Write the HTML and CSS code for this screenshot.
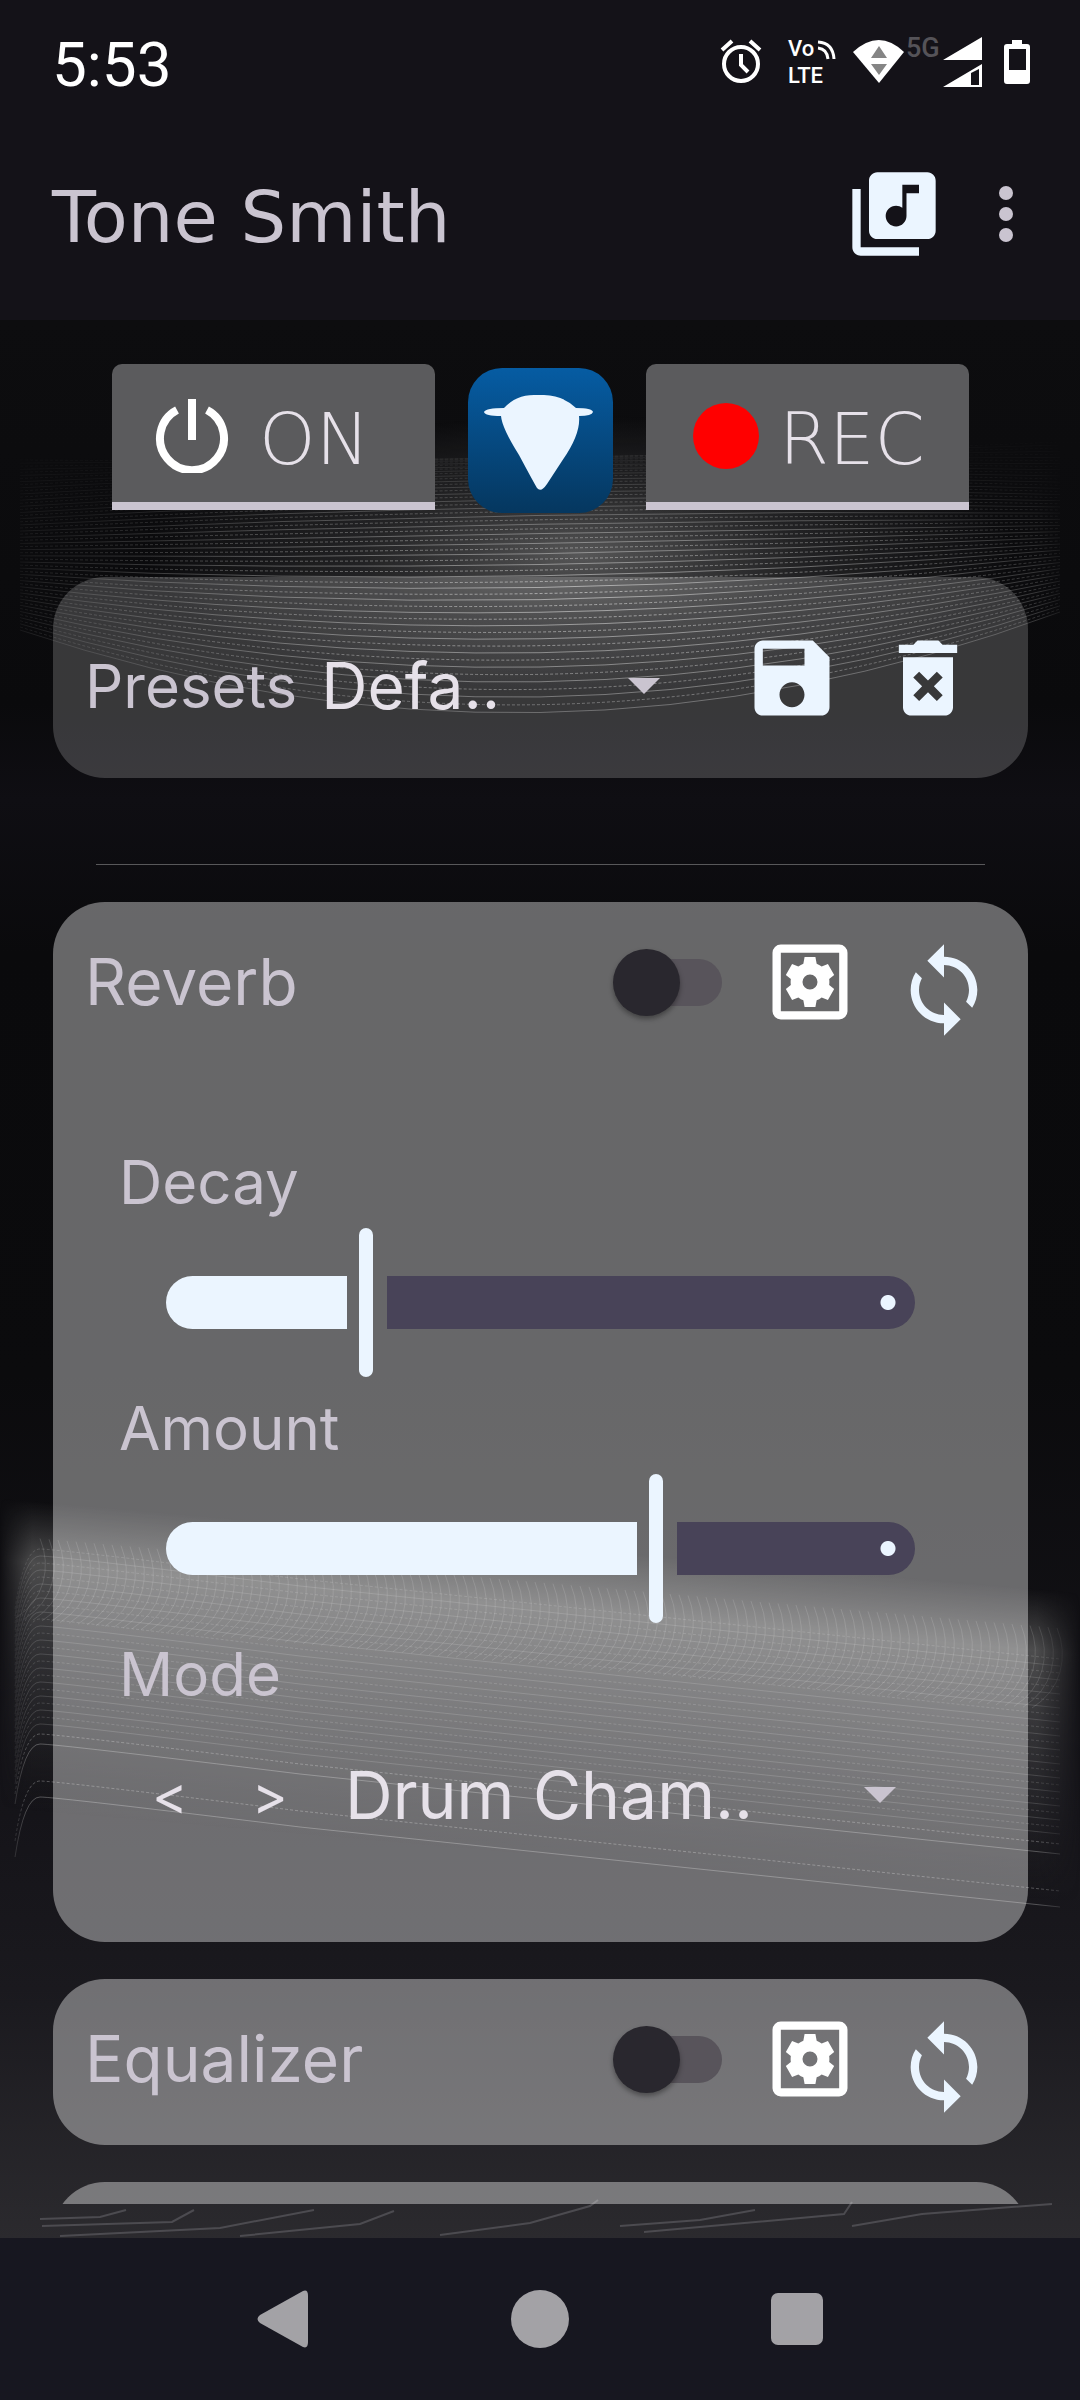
FILE: index.html
```html
<!DOCTYPE html>
<html lang="en">
<head>
<meta charset="utf-8">
<meta name="viewport" content="width=device-width, initial-scale=1">
<title>Tone Smith</title>
<link rel="stylesheet" href="styles.css">
</head>
<body>
<svg class="sprite" aria-hidden="true">
  <symbol id="i-settings" viewBox="0 0 24 24"><path fill-rule="evenodd" d="M5 3h14a2 2 0 0 1 2 2v14a2 2 0 0 1-2 2H5a2 2 0 0 1-2-2V5a2 2 0 0 1 2-2zM5 5v14h14V5z"/><path fill-rule="evenodd" d="M16.6 12.7q.1-.7 0-1.4l1.2-1-1.5-2.6-1.5.6q-.6-.5-1.2-.7L13.300 6h-2.600l-.3 1.600q-.6.200-1.200.7l-1.500-.6-1.500 2.600 1.200 1q-.1.700 0 1.400l-1.200 1 1.500 2.600 1.500-.6q.6.500 1.200.7l.3 1.600h2.600l.3-1.600q.6-.2 1.200-.7l1.500.6 1.500-2.600zM12 13.800a1.800 1.800 0 1 1 0-3.600 1.800 1.800 0 0 1 0 3.600z"/></symbol>
  <symbol id="i-sync" viewBox="0 0 24 24"><path d="M12 4V1L8 5l4 4V6c3.31 0 6 2.69 6 6 0 1.01-.25 1.97-.7 2.8l1.46 1.46C19.54 15.03 20 13.57 20 12c0-4.42-3.58-8-8-8zm0 14c-3.31 0-6-2.69-6-6 0-1.01.25-1.97.7-2.8L5.240 7.740C4.460 8.970 4 10.430 4 12c0 4.420 3.580 8 8 8v3l4-4-4-4v3z"/></symbol>
</svg>

<div class="app">
  <header class="top">
    <div class="status">
      <time class="clock">5:53</time>
      <svg class="status-icons" viewBox="0 0 312 52" role="img" aria-label="Alarm, VoLTE, Wi-Fi, 5G signal, battery">
        <g fill="none" stroke="#fff" stroke-width="4">
          <circle cx="21" cy="29" r="17"/><path d="M21 19v11l7 7M2 15l10-9M40 15l-10-9"/>
        </g>
        <g fill="none" stroke="#fff" stroke-width="3"><path d="M98 13q9 1 10 11M98 7q15 1 16 17"/></g>
        <g class="vo"><text x="68" y="21">Vo</text><text x="68" y="48">LTE</text></g>
        <path fill="#fff" d="M133 17q26-24 51 0l-25 31z"/>
        <path fill="#858585" d="M159 11l8 12h-16zM159 40l8-11h-16z"/><text class="fiveg" x="186" y="22">5G</text>
        <path fill="#fff" fill-rule="evenodd" d="M223 25l39-23v23zM223 52l39-23v23zM251 38v12h8V34z"/>
        <path fill="#fff" fill-rule="evenodd" d="M292 5h10v4h5q3 0 3 3v34q0 3-3 3h-20q-3 0-3-3V12q0-3 3-3h5zM289 14v21h17V14z"/>
      </svg>
    </div>
    <div class="appbar">
      <h1 class="title">Tone Smith</h1>
      <button class="icon-btn" aria-label="Music library"><svg class="icon" viewBox="0 0 24 24"><path d="M20 2H8c-1.1 0-2 .9-2 2v12c0 1.100.9 2 2 2h12c1.100 0 2-.9 2-2V4c0-1.100-.9-2-2-2zm-2 5h-3v5.500c0 1.380-1.120 2.500-2.500 2.500S10 13.880 10 12.500s1.120-2.500 2.500-2.500c.57 0 1.080.19 1.500.51V5h4v2zM4 6H2v14c0 1.100.9 2 2 2h14v-2H4V6z"/></svg></button>
      <button class="more" aria-label="More options"><svg class="dots" viewBox="0 0 16 56"><circle cx="8" cy="7" r="7"/><circle cx="8" cy="28" r="7"/><circle cx="8" cy="49" r="7"/></svg></button>
    </div>
  </header>

  <main class="stage">
    <svg class="waves" viewBox="0 0 1080 1918" preserveAspectRatio="none" aria-hidden="true">
      <defs>
        <radialGradient id="glow"><stop offset="0" stop-color="#8a8a8a" stop-opacity=".6"/><stop offset=".5" stop-color="#777" stop-opacity=".22"/><stop offset="1" stop-color="#777" stop-opacity="0"/></radialGradient>
        <radialGradient id="beam" gradientUnits="userSpaceOnUse" cx="0" cy="0" r="1" gradientTransform="translate(580 270) scale(560 180)"><stop offset="0" stop-color="#ccc" stop-opacity=".75"/><stop offset=".6" stop-color="#aaa" stop-opacity=".5"/><stop offset="1" stop-color="#999" stop-opacity=".15"/></radialGradient>
        <linearGradient id="ramp" x1="0" y1="0" x2="0" y2="1"><stop offset="0" stop-color="#555" stop-opacity="0"/><stop offset=".2" stop-color="#5c5c5c" stop-opacity=".8"/><stop offset=".4" stop-color="#4a4a4c" stop-opacity=".7"/><stop offset=".7" stop-color="#333336" stop-opacity=".5"/><stop offset="1" stop-color="#222" stop-opacity="0"/></linearGradient>
        <linearGradient id="side" x1="0" x2="1" y1="0" y2="0"><stop offset="0" stop-color="#000"/><stop offset=".03" stop-color="#fff"/><stop offset=".96" stop-color="#fff"/><stop offset="1" stop-color="#000"/></linearGradient>
        <linearGradient id="cap" x1="0" x2="0" y1="0" y2="1"><stop offset=".05" stop-color="#000"/><stop offset=".11" stop-color="#fff"/></linearGradient>
        <mask id="edges"><rect width="1080" height="1918" fill="url(#side)"/></mask>
        <mask id="fade"><rect width="1080" height="1918" fill="url(#cap)"/></mask>
      </defs>
      <g mask="url(#edges)">
        <ellipse cx="580" cy="235" rx="440" ry="140" fill="url(#glow)"/>
        <g mask="url(#fade)"><g id="arcs" class="lines arcs"></g></g>
        <g transform="translate(0 1178) skewY(5)"><rect width="1080" height="310" fill="url(#ramp)"/></g>
        <g id="slopes" class="lines"></g>
      </g>
      <path class="streak" d="M40 1899l60-2 26-7M42 1906l130-4 22-12M60 1916l160-8 94-18M240 1916l120-12 34-13M440 1915l90-12 60-17 8-6M620 1906l80-6 55-10M644 1912l200-18 8-12M852 1906l70-12 130-10"/>
    </svg>

    <section class="pads" aria-label="Transport">
      <button class="pad"><svg class="power" viewBox="0 0 74 74"><path d="M22 11a32 32 0 1 0 30 0M37 0v41"/></svg><span>ON</span></button>
      <svg class="logo" viewBox="0 0 145 145" role="img" aria-label="Tone Smith logo">
        <defs><linearGradient id="blue" x1="0" y1="0" x2="0" y2="1"><stop offset="0" stop-color="#065ca3"/><stop offset="1" stop-color="#05375f"/></linearGradient></defs>
        <rect width="145" height="145" rx="34" fill="url(#blue)"/>
        <path fill="#ebf5ff" d="M36 40Q48 27 66 27h10q20 1 32 13 16 0 17 4-1 4-14 4 2 18-17 45l-15 23q-6 9-10 4Q66 115 51 87 34 60 33 48q-16 0-17-4 2-4 20-4z"/>
      </svg>
      <button class="pad"><span class="rec-dot"></span><span>REC</span></button>
    </section>

    <section class="card presets">
      <label class="label" for="preset">Presets</label>
      <span class="dropdown preset-select"><select id="preset"><option>Defa..</option></select><svg class="caret" viewBox="0 0 32 16"><path d="M0 0h32L16 16z"/></svg></span>
      <button class="icon-btn" aria-label="Save preset"><svg class="icon" viewBox="0 0 24 24"><path d="M17 3H5c-1.110 0-2 .9-2 2v14c0 1.100.89 2 2 2h14c1.100 0 2-.9 2-2V7l-4-4zm-5 16c-1.660 0-3-1.340-3-3s1.340-3 3-3 3 1.340 3 3-1.340 3-3 3zm3-10H5V5h10v4z"/></svg></button>
      <button class="icon-btn" aria-label="Delete preset"><svg class="icon" viewBox="0 0 24 24"><path d="M6 19c0 1.100.9 2 2 2h8c1.100 0 2-.9 2-2V7H6v12zm2.460-7.120l1.410-1.410L12 12.590l2.120-2.120 1.410 1.410L13.410 14l2.120 2.120-1.410 1.410L12 15.410l-2.120 2.120-1.410-1.410L10.590 14l-2.130-2.120zM15.500 4l-1-1h-5l-1 1H5v2h14V4z"/></svg></button>
    </section>

    <div class="rack">
      <hr class="rule">
      <section class="card effect">
        <div class="effect-head">
          <label class="name" for="reverb-on">Reverb</label>
          <input class="switch" id="reverb-on" type="checkbox" role="switch">
          <button class="icon-btn boxed" aria-label="Reverb settings"><svg class="icon"><use href="#i-settings"/></svg></button>
          <button class="icon-btn sync" aria-label="Reset reverb"><svg class="icon"><use href="#i-sync"/></svg></button>
        </div>
        <div class="params">
          <label class="label" for="decay">Decay</label>
          <input class="slider" id="decay" type="range" max="1000" value="263" style="--v:.263">
          <label class="label" for="amount">Amount</label>
          <input class="slider" id="amount" type="range" max="1000" value="657" style="--v:.657">
          <label class="label" for="mode">Mode</label>
          <div class="mode">
            <button class="step" aria-label="Previous mode">&lt;</button>
            <button class="step" aria-label="Next mode">&gt;</button>
            <span class="dropdown"><select id="mode"><option>Drum Cham..</option></select><svg class="caret" viewBox="0 0 32 16"><path d="M0 0h32L16 16z"/></svg></span>
          </div>
        </div>
      </section>
      <section class="card effect">
        <div class="effect-head">
          <label class="name" for="eq-on">Equalizer</label>
          <input class="switch" id="eq-on" type="checkbox" role="switch">
          <button class="icon-btn boxed" aria-label="Equalizer settings"><svg class="icon"><use href="#i-settings"/></svg></button>
          <button class="icon-btn sync" aria-label="Reset equalizer"><svg class="icon"><use href="#i-sync"/></svg></button>
        </div>
      </section>
      <section class="card effect next"></section>
    </div>
  </main>

  <nav class="nav" aria-label="System">
    <button aria-label="Back"><svg viewBox="0 0 58 58"><path d="M49 1q5-2 5 5v46q0 7-5 5L6 33q-5-4 0-8z"/></svg></button>
    <button aria-label="Home"><svg viewBox="0 0 58 58"><circle cx="29" cy="29" r="29"/></svg></button>
    <button aria-label="Recents"><svg viewBox="0 0 58 58"><rect x="3" y="3" width="52" height="52" rx="7"/></svg></button>
  </nav>
</div>
<script src="waves.js"></script>
</body>
</html>
```
FILE: waves.js
```js
const NS = 'http://www.w3.org/2000/svg';
function line(group, d, opacity, dash) {
  const p = document.createElementNS(NS, 'path');
  p.setAttribute('d', d);
  p.setAttribute('stroke-opacity', opacity);
  if (dash) p.setAttribute('stroke-dasharray', dash);
  group.appendChild(p);
}

// Upper wave: bowls that tighten towards the crest.
const arcs = document.getElementById('arcs');
for (let k = 0; k < 56; k++) {
  const t = k / 55;
  const mid = 397 - 255 * (1 - Math.pow(1 - t, 1.7));
  const edge = 310 - 170 * t;
  line(arcs, `M20 ${edge}Q540 ${2 * mid - edge} 1060 ${edge - 18}`,
    1 - 0.3 * t, k % 2 ? '3 2' : '');
}

// Lower wave: slopes falling to the right, packed towards the ridge.
const slopes = document.getElementById('slopes');
const starts = [1477, 1461, 1424, 1414];
for (let y = 1404; y > 1225; y -= 7) starts.push(y);
starts.forEach((y, k) => {
  line(slopes, `M15 ${y + 60}Q24 ${y} 40 ${y}T300 ${y + 30}L1060 ${y + 110}`,
    k < 4 ? 0.35 : 0.2, k % 2 ? '3 2' : '');
});

// Ripples climbing the lit face of the lower wave.
for (let x = 40; x < 1060; x += 9) {
  const y = 1215 + x * 0.088;
  line(slopes, `M${x} ${y}q9 22 3 44t-28 36`, 0.18);
}
```
FILE: styles.css
```css
* { box-sizing: border-box; }
body { margin: 0; background: #141218; color: #cac4d0; font-family: Inter, "Liberation Sans", sans-serif; }
button { margin: 0; padding: 0; border: 0; background: none; color: inherit; font: inherit; }
svg { display: block; }
.sprite { display: none; }
.app { display: flex; flex-direction: column; min-height: 100vh; }

.top { padding: 30px 48px 0 52px; height: 320px; }
.status { display: flex; justify-content: space-between; align-items: center; height: 70px; }
.clock { color: #fff; font: 400 62px/70px Roboto, sans-serif; }
.status-icons { width: 312px; height: 52px; margin-bottom: 8px; overflow: visible; }
.vo { fill: #fff; font: 500 22px Roboto, sans-serif; }
.fiveg { fill: #555358; font: 500 27px Roboto, sans-serif; }
.appbar { display: flex; align-items: center; margin-top: 62px; height: 104px; }
.title { flex: 1; margin: 0; padding-top: 6px; font: 400 72px/80px "DejaVu Sans", sans-serif; }
.icon-btn { flex: none; color: #ebf5ff; }
.icon { width: 100px; height: 100px; fill: currentColor; }
.more { margin-left: 36px; width: 52px; height: 100px; display: grid; place-items: center; }
.dots { width: 16px; height: 56px; fill: #cac4d0; }

.stage { position: relative; flex: 1; padding: 44px 52px 34px 53px; background: linear-gradient(#0d0d0f, #0a0a0c 20%, #0f0e13 25%, #0a0a0c 33%, #0b0b0d 55%, #151419 78%, #1a191e 87%, #2b2a2e); }
.waves { position: absolute; inset: 0; width: 100%; height: 100%; }
.lines path { fill: none; stroke: #c8c8c8; stroke-width: 1; }
.arcs path { stroke: url(#beam); }
.streak { fill: none; stroke: #4c4b50; stroke-width: 2; }
.pads, .presets, .rack { position: relative; }

.pads { display: flex; justify-content: center; gap: 33px; height: 149px; }
.pad { display: flex; align-items: center; gap: 30px; width: 323px; height: 146px; padding: 6px 0 0 43px; border-bottom: 8px solid #cac4d0; border-radius: 10px 10px 0 0; background: #5b5b5d; color: #e6e1e9; font: 200 72px/72px "DejaVu Sans", sans-serif; }
.power { width: 74px; height: 74px; fill: none; stroke: #fff; stroke-width: 8; }
.pad span { padding-top: 6px; }
.pad .rec-dot { width: 66px; height: 66px; margin: 0 -10px 0 4px; border-radius: 50%; background: #f00; }
.logo { width: 145px; height: 145px; margin-top: 4px; }

.card { border-radius: 52px; }
.label { font-size: 60px; line-height: 72px; }
.presets { display: flex; align-items: center; margin-top: 64px; height: 201px; padding: 0 50px 0 32px; background: rgba(255, 255, 255, .19); }
.presets .icon-btn { margin-left: 34px; }
.presets .icon-btn + .icon-btn { margin-left: 36px; }
.presets .label, .preset-select { padding-top: 16px; }
.dropdown { display: grid; align-items: center; flex: 1; color: #e6e1e9; }
.dropdown select { grid-area: 1 / 1; width: 100%; appearance: none; margin: 0; padding: 0; border: 0; background: none; color: inherit; font: 400 64px/80px Inter, sans-serif; }
.caret { grid-area: 1 / 1; justify-self: end; width: 32px; height: 16px; fill: #cac4d0; pointer-events: none; }
.preset-select { margin: 0 48px 0 24px; }

.rack { height: 1340px; margin-top: 86px; overflow: hidden; }
.rule { height: 1px; margin: 0 43px 37px; border: 0; background: #58585a; }
.effect { margin-bottom: 37px; background: rgba(255, 255, 255, .38); }
.effect-head { display: flex; align-items: center; height: 166px; padding: 0 34px 6px 32px; }
.name { flex: 1; font-size: 64px; line-height: 80px; }
.boxed { color: #fff; margin-left: 38px; }
.sync { margin: 16px 0 0 34px; }
.switch { appearance: none; display: grid; align-items: center; margin: 0; width: 109px; height: 67px; }
.switch::before, .switch::after { content: ""; grid-area: 1 / 1; }
.switch::before { justify-self: end; width: 96px; height: 47px; border-radius: 24px; background: #58545b; }
.switch::after { width: 67px; height: 67px; border-radius: 50%; background: #29272e; box-shadow: 0 3px 5px rgba(0, 0, 0, .35); }

.params { display: flex; flex-direction: column; padding: 78px 66px 107px; }
.slider { appearance: none; width: auto; height: 149px; margin: 10px 47px 15px; background: none; }
.slider::-webkit-slider-runnable-track {
  height: 53px; border-radius: 27px;
  background:
    radial-gradient(circle at calc(100% - 27px) 50%, #ebf5ff 7px, transparent 8px),
    linear-gradient(90deg, #ebf5ff calc(7px + (100% - 14px) * var(--v) - 19px), transparent 0, transparent calc(7px + (100% - 14px) * var(--v) + 21px), #484358 0);
}
.slider::-webkit-slider-thumb { appearance: none; width: 14px; height: 149px; margin-top: -48px; border-radius: 7px; background: #ebf5ff; }
.mode { display: flex; align-items: center; height: 80px; margin: 45px 66px 0 22px; color: #e6e1e9; }
.mode select { font-size: 66px; }
.step { width: 100px; height: 80px; padding-left: 11px; text-align: left; font-size: 54px; }
.mode .dropdown { margin-left: 4px; }
.next { height: 167px; }

.nav { display: grid; grid-template-columns: repeat(3, 1fr); height: 162px; padding: 0 154px; background: #171720; }
.nav button { display: grid; place-items: center; }
.nav svg { width: 58px; height: 58px; fill: #a3a2a6; }
```
